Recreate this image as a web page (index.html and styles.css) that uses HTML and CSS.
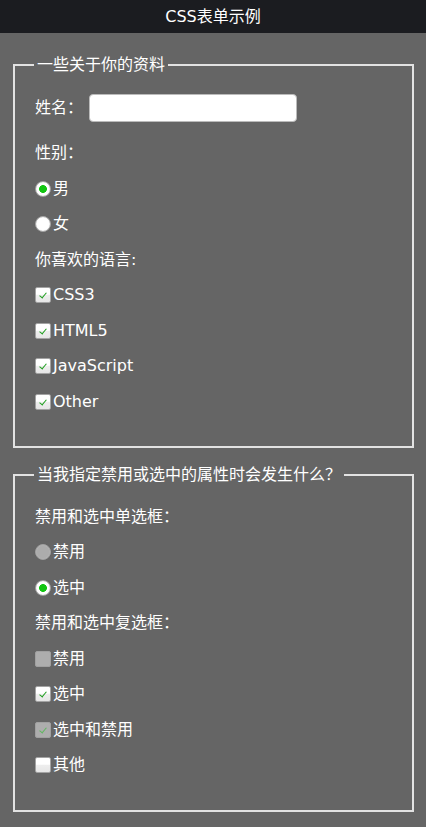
FILE: index.html
```html
<!DOCTYPE html>
<html lang="zh-CN">
<head>
    <meta charset="UTF-8">
    <meta name="viewport" content="width=device-width, initial-scale=1.0">
    <title>CSS表单示例</title>
    <link rel="stylesheet" href="styles.css">
</head>
<body>

    <header class="topbar">CSS表单示例</header>

    <form class="demo-form">

        <fieldset>
            <legend>一些关于你的资料</legend>

            <div class="row name-row">
                <label for="userName">姓名：</label>
                <input type="text" id="userName" class="text-input">
            </div>

            <div class="row">性别：</div>
            <label class="row"><input type="radio" name="sex" checked>男</label>
            <label class="row"><input type="radio" name="sex">女</label>

            <div class="row">你喜欢的语言:</div>
            <label class="row"><input type="checkbox" checked>CSS3</label>
            <label class="row"><input type="checkbox" checked>HTML5</label>
            <label class="row"><input type="checkbox" checked>JavaScript</label>
            <label class="row"><input type="checkbox" checked>Other</label>
        </fieldset>

        <fieldset>
            <legend>当我指定禁用或选中的属性时会发生什么？</legend>

            <div class="row">禁用和选中单选框：</div>
            <label class="row"><input type="radio" name="demo" disabled>禁用</label>
            <label class="row"><input type="radio" name="demo" checked>选中</label>

            <div class="row">禁用和选中复选框：</div>
            <label class="row"><input type="checkbox" disabled>禁用</label>
            <label class="row"><input type="checkbox" checked>选中</label>
            <label class="row"><input type="checkbox" checked disabled>选中和禁用</label>
            <label class="row"><input type="checkbox">其他</label>
        </fieldset>

    </form>

</body>
</html>
```

FILE: styles.css
```css
body {
    margin: 0;
    padding-bottom: 15px;
    background: #656565;
    color: #fff;
    font-family: "DejaVu Sans", "Noto Sans CJK SC", sans-serif;
    font-size: 16px;
}
.topbar {
    height: 33px;
    line-height: 33px;
    background: #1b1c20;
    text-align: center;
    font-size: 16px;
}
.demo-form {
    padding: 0 12px 0 13px;
}
fieldset {
    margin: 21px 0 0;
    padding: 5px 19px 19px 20px;
    border: 2px solid #e2e2e2;
}
fieldset + fieldset { margin-top: 16px; }
legend {
    margin-left: -1px;
    padding: 0 3px;
    line-height: 22px;
}
.row {
    display: flex;
    align-items: center;
    height: 20px;
    line-height: 20px;
    margin: 15.5px 0;
}
.name-row {
    height: 28px;
    margin: 13px 0 21px;
}
.text-input {
    width: 208px;
    height: 28px;
    box-sizing: border-box;
    margin: 0 0 0 6px;
    border: 1px solid #bbb;
    border-radius: 4px;
    background: #fff;
}

input[type=radio],
input[type=checkbox] {
    appearance: none;
    -webkit-appearance: none;
    position: relative;
    flex: none;
    width: 16px;
    height: 16px;
    margin: 0 2px 0 0;
    box-sizing: border-box;
    border: 1px solid #a3a3a3;
}
input[type=radio] {
    border-radius: 50%;
    background: #fff;
    box-shadow: inset 0 0 1px #ccc;
}
input[type=radio]:checked {
    background: radial-gradient(circle, #12c512 0 3.6px, #fff 4.2px);
}
input[type=radio]:disabled {
    background: #acacac;
    border-color: #a0a0a0;
}
input[type=checkbox] {
    border-radius: 2px;
    background: linear-gradient(#fff 0, #fff 45%, #eee 50%, #e6e6e6 100%);
}
input[type=checkbox]:checked::after {
    content: "";
    position: absolute;
    left: 5px;
    top: 3px;
    width: 3px;
    height: 6px;
    border: solid #1e9e1e;
    border-width: 0 1.6px 1.6px 0;
    transform: rotate(40deg);
}
input[type=checkbox]:disabled {
    background: #adadad;
    border-color: #a0a0a0;
}
input[type=checkbox]:checked:disabled::after {
    border-color: #5fb85f;
}
```
